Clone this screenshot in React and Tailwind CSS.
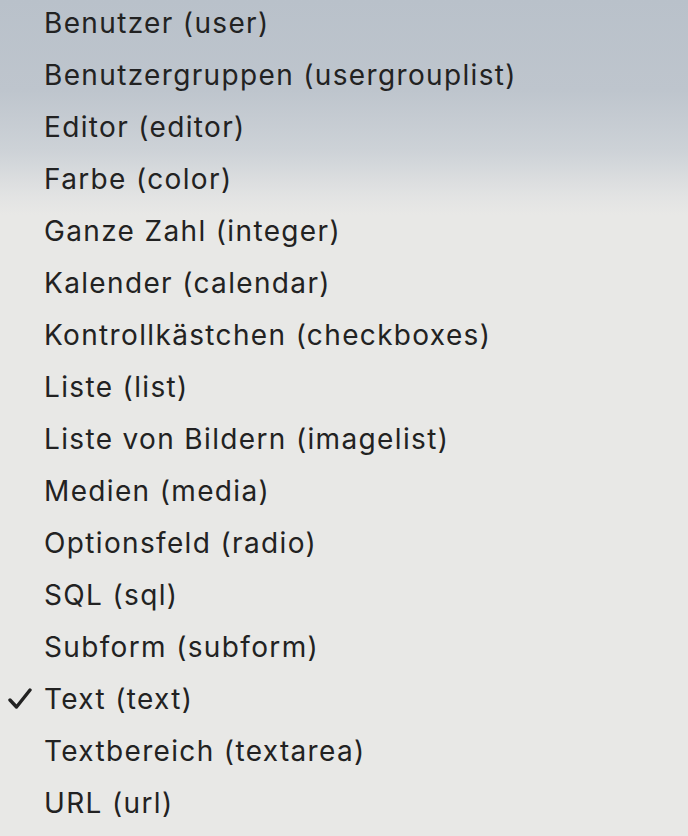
import React from "react";

const items = [
  "Benutzer (user)",
  "Benutzergruppen (usergrouplist)",
  "Editor (editor)",
  "Farbe (color)",
  "Ganze Zahl (integer)",
  "Kalender (calendar)",
  "Kontrollkästchen (checkboxes)",
  "Liste (list)",
  "Liste von Bildern (imagelist)",
  "Medien (media)",
  "Optionsfeld (radio)",
  "SQL (sql)",
  "Subform (subform)",
  "Text (text)",
  "Textbereich (textarea)",
  "URL (url)",
];

export default function App() {
  return (
    <div className="w-[688px] h-[836px] overflow-hidden bg-[linear-gradient(180deg,#b9c1ca_0px,#bec5cd_90px,#cdd2d7_150px,#e2e3e3_195px,#e8e8e6_215px,#e8e8e6_100%)] font-['Inter','Liberation_Sans',sans-serif] text-[#222222]">
      <ul className="-mt-[3px] flex flex-col">
        {items.map((t) => (
          <li key={t} className="h-[52px] flex items-center">
            <span className="w-[44px] flex items-center justify-center shrink-0">
              {t === "Text (text)" && (
                <svg width="26" height="24" viewBox="0 0 26 24" className="ml-[-2px]">
                  <polyline
                    points="2,13 8.5,20 22,3"
                    fill="none"
                    stroke="#222"
                    strokeWidth="3.4"
                    strokeLinecap="round"
                    strokeLinejoin="round"
                  />
                </svg>
              )}
            </span>
            <span className="text-[28px] leading-none tracking-[1.35px]">{t}</span>
          </li>
        ))}
      </ul>
    </div>
  );
}
